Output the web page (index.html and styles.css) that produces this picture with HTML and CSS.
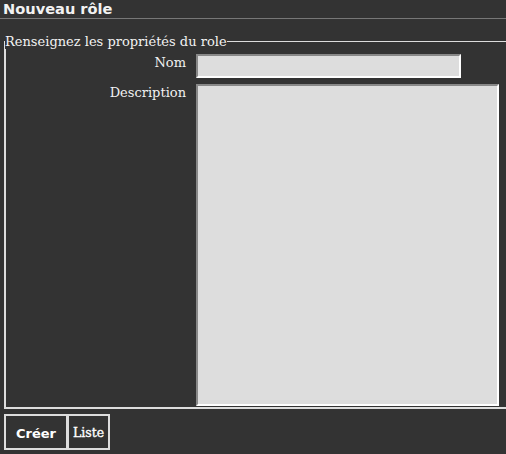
FILE: index.html
```html
<!DOCTYPE html>
<html lang="fr">
<head>
<meta charset="utf-8">
<title>Nouveau rôle</title>
<link rel="stylesheet" href="styles.css">
</head>
<body>
<h1 class="title">Nouveau rôle</h1>
<form class="form">
  <fieldset class="box">
    <legend class="legend">Renseignez les propriétés du role</legend>
    <div class="grid">
      <label class="label" for="nom">Nom</label>
      <input class="field field-nom" id="nom" type="text">
      <label class="label" for="desc">Description</label>
      <textarea class="field field-desc" id="desc"></textarea>
    </div>
  </fieldset>
  <div class="actions">
    <button class="btn btn-create" type="button">Créer</button>
    <button class="btn btn-list" type="button"><span class="serif">Liste</span></button>
  </div>
</form>
</body>
</html>
```
FILE: styles.css
```css
html, body {
  margin: 0;
  padding: 0;
  background: #333333;
  color: #eeeeee;
  overflow: hidden;
}
body {
  width: 506px;
  height: 454px;
}
.title {
  margin: 0;
  padding: 0 3px 1px 3px;
  font: bold 14.6px/17px "DejaVu Sans", sans-serif;
  color: #f2f2f2;
  border-bottom: 1px solid #777777;
}
.form {
  margin: 0;
}
.box {
  margin: 15px 0 0 4px;
  padding: 0 0 1px 0;
  width: 540px;
  box-sizing: border-box;
  border: 2px solid #dddddd;
  border-top-width: 1px;
  border-right: none;
}
.legend {
  padding: 0;
  margin-left: -1px;
  font: 13px/15px "DejaVu Serif", serif;
  color: #f2f2f2;
}
.grid {
  display: grid;
  grid-template-columns: 180px auto;
  column-gap: 10px;
  row-gap: 6px;
  align-items: start;
  margin-top: 5px;
}
.label {
  text-align: right;
  font: 13px/15px "DejaVu Serif", serif;
  color: #f2f2f2;
  padding-top: 1px;
}
.field {
  box-sizing: border-box;
  margin: 0;
  background: #dddddd;
  border: 2px solid;
  border-color: #888888 #ffffff #ffffff #888888;
  padding: 0;
  font: 13px "DejaVu Sans", sans-serif;
}
.field-nom {
  width: 265px;
  height: 24px;
}
.field-desc {
  width: 303px;
  height: 322px;
  resize: none;
  display: block;
}
.actions {
  display: flex;
  margin: 5px 0 0 4px;
}
.btn {
  box-sizing: border-box;
  height: 36px;
  margin: 0;
  background: #333333;
  color: #ffffff;
  border: 2px solid #dddddd;
  padding: 0;
}
.btn-create {
  width: 64px;
  font: bold 13px "DejaVu Sans", sans-serif;
  padding-top: 3px;
}
.btn-list {
  width: 43px;
  margin-left: -1px;
}
.serif {
  font-family: "DejaVu Serif", serif;
  font-weight: normal;
  font-size: 12.5px;
  -webkit-text-stroke: 0.35px #ffffff;
}
```
